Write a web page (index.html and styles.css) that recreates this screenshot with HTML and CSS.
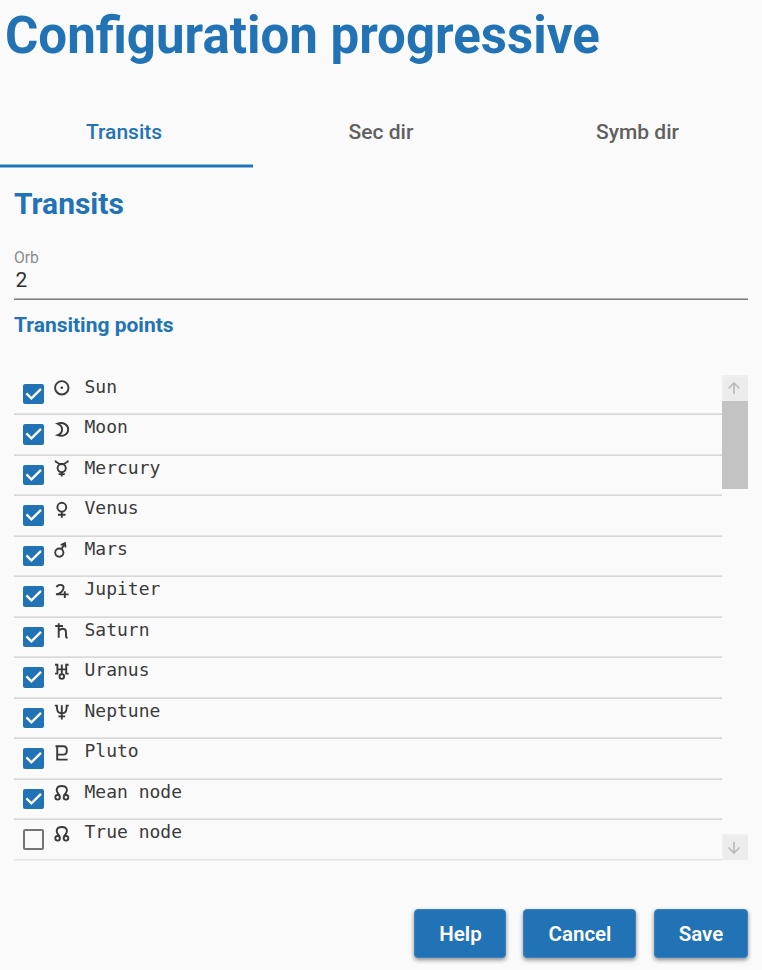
FILE: index.html
```
<!DOCTYPE html>
<html lang="en">
<head>
<meta charset="utf-8">
<title>Configuration progressive</title>
<link rel="stylesheet" href="styles.css">
</head>
<body>
<svg class="defs" aria-hidden="true">
  <symbol id="check" viewBox="0 0 21 21"><path d="M3.4 9.4 8.4 14.3 18 4.9"/></symbol>
  <symbol id="sun" viewBox="0 0 16 18"><circle cx="7.8" cy="8.8" r="6.7"/><circle class="dot" cx="7.8" cy="8.8" r="1.3"/></symbol>
  <symbol id="moon" viewBox="0 0 16 18"><path d="M3.6 3.6C9.6 1.6 14.2 5 14.2 9.4S9.6 17.2 3.6 15.2C9.6 12.6 9.6 6.2 3.6 3.6Z"/></symbol>
  <symbol id="mercury" viewBox="0 0 16 18"><path d="M.8 1.3C3 1.3 3 4.2 7.7 4.2S12.4 1.3 14.6 1.3M7.7 12V16.4M4.6 14.1H10.8"/><circle cx="7.7" cy="8.1" r="4.1"/></symbol>
  <symbol id="venus" viewBox="0 0 16 18"><circle cx="7.8" cy="6.2" r="4.4"/><path d="M7.8 10.4V16.8M4 13.8H11.6"/></symbol>
  <symbol id="mars" viewBox="0 0 16 18"><circle cx="5.3" cy="11.6" r="4.1"/><path d="M7.4 8.2 10.6 2.8M6.8 4 10.9 2.2 11.6 6.4"/></symbol>
  <symbol id="jupiter" viewBox="0 0 16 18"><path d="M2.6 5.2C3.6 2 9.6 2.2 9.6 5.6 9.6 8.6 6.6 11.6 2 12.4H14.6M10.8 9.2V16"/></symbol>
  <symbol id="saturn" viewBox="0 0 16 18"><path d="M1.2 4H9M4.7 1.2V15.8M4.7 8.9C6.6 6 12 5.8 12 10.2V14C12 15.3 12.6 15.8 13.6 15.8"/></symbol>
  <symbol id="uranus" viewBox="0 0 16 18"><path d="M1 1.8H3.4V10.6H1M14.6 1.8H12.2V10.6H14.6M3.4 6.4H12.2M7.8 1.4V11"/><circle cx="7.8" cy="13.6" r="2.3"/></symbol>
  <symbol id="neptune" viewBox="0 0 16 18"><path d="M.8 2.6H2.9C2.9 7 3.3 10.4 7.8 10.4S12.7 7 12.7 2.6H14.8M7.8 2.2V16.6M4.4 13.4H11.2"/></symbol>
  <symbol id="pluto" viewBox="0 0 16 18"><path d="M1.5 2.3H9.3C14 2.3 14 10.6 9.3 10.6H3.2M3.2 2.3V15.6H13.6"/></symbol>
  <symbol id="node" viewBox="0 0 16 18"><path d="M5.6 11.4C.6 6 2.6 2 7.8 2S15 6 10 11.4"/><circle cx="3.6" cy="13.3" r="2.3"/><circle cx="12" cy="13.3" r="2.3"/></symbol>
</svg>
<h1 class="title">Configuration progressive</h1>
<nav class="tabs">
  <a class="tab active">Transits</a>
  <a class="tab">Sec dir</a>
  <a class="tab last">Symb dir</a>
</nav>
<main class="content">
  <h2 class="section">Transits</h2>
  <div class="field">
    <label class="label" for="orb">Orb</label>
    <input class="input" id="orb" value="2">
  </div>
  <h3 class="subsection">Transiting points</h3>
  <div class="list">
    <div class="rows">
      <div class="row"><span class="box on"><svg><use href="#check"/></svg></span><svg class="glyph"><use href="#sun"/></svg><span class="name">Sun</span></div>
      <div class="row"><span class="box on"><svg><use href="#check"/></svg></span><svg class="glyph"><use href="#moon"/></svg><span class="name">Moon</span></div>
      <div class="row"><span class="box on"><svg><use href="#check"/></svg></span><svg class="glyph"><use href="#mercury"/></svg><span class="name">Mercury</span></div>
      <div class="row"><span class="box on"><svg><use href="#check"/></svg></span><svg class="glyph"><use href="#venus"/></svg><span class="name">Venus</span></div>
      <div class="row"><span class="box on"><svg><use href="#check"/></svg></span><svg class="glyph"><use href="#mars"/></svg><span class="name">Mars</span></div>
      <div class="row"><span class="box on"><svg><use href="#check"/></svg></span><svg class="glyph"><use href="#jupiter"/></svg><span class="name">Jupiter</span></div>
      <div class="row"><span class="box on"><svg><use href="#check"/></svg></span><svg class="glyph"><use href="#saturn"/></svg><span class="name">Saturn</span></div>
      <div class="row"><span class="box on"><svg><use href="#check"/></svg></span><svg class="glyph"><use href="#uranus"/></svg><span class="name">Uranus</span></div>
      <div class="row"><span class="box on"><svg><use href="#check"/></svg></span><svg class="glyph"><use href="#neptune"/></svg><span class="name">Neptune</span></div>
      <div class="row"><span class="box on"><svg><use href="#check"/></svg></span><svg class="glyph"><use href="#pluto"/></svg><span class="name">Pluto</span></div>
      <div class="row"><span class="box on"><svg><use href="#check"/></svg></span><svg class="glyph"><use href="#node"/></svg><span class="name">Mean node</span></div>
      <div class="row"><span class="box"></span><svg class="glyph"><use href="#node"/></svg><span class="name">True node</span></div>
    </div>
    <div class="scrollbar">
      <div class="arrow"><svg viewBox="0 0 26 26"><path d="M12 19V8M6.5 13.5 12 8 17.5 13.5"/></svg></div>
      <div class="thumb"></div>
      <div class="arrow down"><svg viewBox="0 0 26 26"><path d="M12 8V19M6.5 13.5 12 19 17.5 13.5"/></svg></div>
    </div>
  </div>
  <div class="actions">
    <button class="button help">Help</button>
    <button class="button cancel">Cancel</button>
    <button class="button save">Save</button>
  </div>
</main>
</body>
</html>
```
FILE: styles.css
```
* { box-sizing: border-box; }
body {
  margin: 0;
  height: 970px;
  overflow: hidden;
  background: #fafafa;
  color: #3a3a3a;
  font-family: Roboto, sans-serif;
}
.defs { display: none; }
h1, h2, h3 { margin: 0; color: #2173b5; }
.title {
  height: 96px;
  padding: 5px 0 0 5px;
  font-size: 51px;
  line-height: 62px;
  font-weight: 700;
  white-space: nowrap;
}
.tabs { display: flex; height: 72px; }
.tab {
  flex: 1;
  text-align: center;
  font-size: 21px;
  line-height: 72px;
  font-weight: 500;
  color: #606060;
}
.tab.active {
  flex: 0 0 253px;
  padding-right: 5px;
  color: #2173b5;
  background: linear-gradient(#8ebadb 1px, #2173b5 1px, #2173b5 3px, #8ebadb 3px) 0 100% / 100% 4px no-repeat;
}
.tab.last { flex: 0 0 253px; padding-left: 4px; }
.content { padding: 0 14px; }
.section {
  height: 81px;
  padding-top: 18px;
  font-size: 30px;
  line-height: 36px;
  font-weight: 700;
}
.field { height: 51px; border-bottom: 1px solid #808080; box-shadow: inset 0 -1px #b4b4b4; }
.label {
  display: block;
  font-size: 15.7px;
  line-height: 18px;
  color: #8c8c8c;
}
.input {
  display: block;
  width: 100%;
  height: 26px;
  padding: 0 1.5px;
  border: 0;
  background: none;
  font: 21px/26px Roboto, sans-serif;
  color: #303030;
}
.subsection {
  height: 74.5px;
  padding-top: 12px;
  font-size: 21px;
  line-height: 26px;
  font-weight: 700;
}
.list { display: flex; height: 486px; }
.rows { flex: 1; }
.row {
  display: flex;
  height: 40.5px;
  padding-left: 9px;
  border-bottom: 1px solid #d8d8d8;
  box-shadow: inset 0 -1px #e4e4e4;
}
.row:last-child { border-bottom-color: #efefef; box-shadow: inset 0 -1px #e4e4e4; }
.box {
  width: 21px;
  height: 20.5px;
  margin-top: 9.2px;
  border: 2px solid #757575;
  border-radius: 2px;
}
.box.on { border: 0; background: #2173b5; }
.box svg { display: block; width: 21px; height: 21px; fill: none; stroke: #fff; stroke-width: 2.3; }
.glyph {
  width: 16px;
  height: 18px;
  margin: 4.5px 14.5px 0 10px;
  fill: none;
  stroke: #3a3a3a;
  stroke-width: 1.9;
}
.dot { fill: #3a3a3a; stroke: none; }
.name { font: 18px/24px "DejaVu Sans Mono", monospace; }
.scrollbar {
  display: flex;
  flex-direction: column;
  width: 26px;
  padding: .5px 0 1px;
}
.arrow { height: 26px; background: #ececec; border: solid #f0f0f0; border-width: 2px 0 0 2px; }
.arrow svg { display: block; width: 26px; height: 26px; margin: -2px 0 0 -2px; fill: none; stroke: #bcbcbc; stroke-width: 1.7; }
.arrow.down { margin-top: auto; }
.thumb { height: 88px; background: #c3c3c3; }
.actions {
  display: flex;
  justify-content: flex-end;
  padding-top: 48.5px;
}
.button {
  height: 49px;
  padding: 0;
  border: 1px solid #3b83bc;
  border-radius: 4px;
  background: #2173b5;
  color: #fff;
  font: 600 20.5px/24px Roboto, sans-serif;
  box-shadow: 0 2px 4px rgba(0, 0, 0, .45);
}
.help { width: 92px; padding-left: 1px; }
.cancel { width: 113px; margin: 0 18px 0 17px; padding-left: 1px; }
.save { width: 94px; }
```
